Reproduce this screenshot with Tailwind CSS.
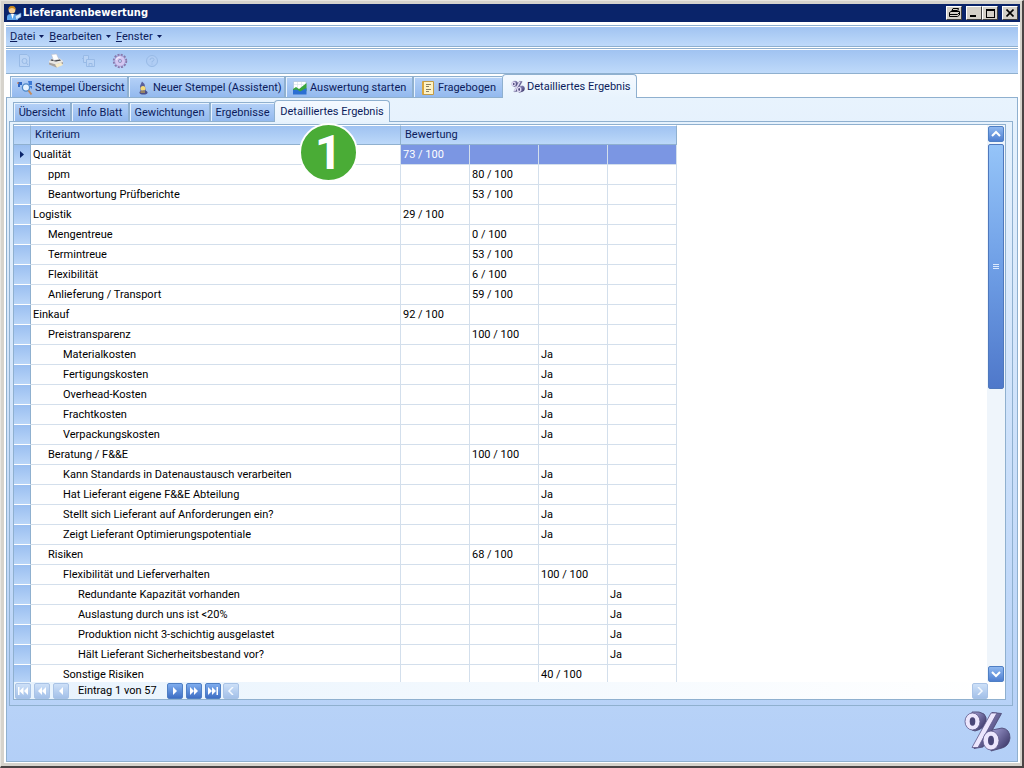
<!DOCTYPE html>
<html lang="de">
<head>
<meta charset="utf-8">
<title>Lieferantenbewertung</title>
<script src="https://cdn.jsdelivr.net/npm/@tailwindcss/browser@4"></script>
</head>
<body class="h-screen overflow-hidden bg-[#d6d3cc] font-['Roboto','Noto_Sans',sans-serif] text-[11px] leading-4 text-[#0c1c5c]">
<svg width="0" height="0" class="absolute">
  <defs>
    <linearGradient id="violet" x1="0" y1="0" x2="1" y2="1"><stop offset="0" stop-color="#a5a1d6"/><stop offset="1" stop-color="#2b2758"/></linearGradient>
    <symbol id="percent" viewBox="0 0 48 42">
      <path d="M9 1 Q17 0 21 3 Q24 6 23 11 Q21 18 12 20 L9 19Z" fill="url(#violet)" stroke="#48446e" stroke-width=".8"/>
      <path d="M29 1.500 L38.500 2.500 L20 36 L11 37.500Z" fill="url(#violet)" stroke="#48446e" stroke-width=".8"/>
      <path d="M29 19 L39 17 Q47 18 47 27 Q46 35 39 37 L28 40Z" fill="url(#violet)" stroke="#48446e" stroke-width=".8"/>
      <path d="M28 2 L34 2 L15 36.500 L9 36.500Z" fill="#ece6fd" stroke="#5d5788" stroke-width=".8"/>
      <ellipse cx="9.500" cy="10.500" rx="7.500" ry="8.500" fill="#ece6fd" stroke="#5d5788" stroke-width=".8"/>
      <ellipse cx="9.500" cy="10.500" rx="2.800" ry="4.200" fill="#4a4678"/>
      <ellipse cx="28" cy="29.500" rx="8" ry="9.500" fill="#ece6fd" stroke="#5d5788" stroke-width=".8"/>
      <ellipse cx="28" cy="29.500" rx="3" ry="4.800" fill="#4a4678"/>
    </symbol>
  </defs>
</svg>
<div class="flex h-full flex-col border-t border-l border-r-2 border-b-2 border-t-[#e8e6e0] border-l-[#e8e6e0] border-r-[#4a4444] border-b-[#4a4444] p-[3px] pr-0.5">
  <header class="flex h-[18px] shrink-0 items-center bg-[#0a246a] pr-0.5 pl-0.5 text-white">
    <svg class="h-4 w-4 shrink-0" viewBox="0 0 16 16">
      <path d="M1 15 V12 Q1 9 5 9 H8 Q12 9 12 12 V15Z" fill="#5aa5ee"/>
      <circle cx="6" cy="5" r="3.400" fill="#f6cf94"/><path d="M2.500 5 Q2 1 6 1 Q10 1 9.600 5 Q8 3 6 3 Q4 3 2.500 5Z" fill="#c98a1c"/>
      <path d="M5 9 L6.500 14 L8 9Z" fill="#fff"/><path d="M9 11 L15 8 V12 L10 15Z" fill="#cfe6fb" stroke="#3f82cc" stroke-width=".6"/>
    </svg>
    <h1 class="ml-px font-['DejaVu_Sans_Condensed','Noto_Sans',sans-serif] text-[11px] font-bold">Lieferantenbewertung</h1>
    <div class="ml-auto flex items-center text-black">
      <button aria-label="Drucken" class="mr-1 flex h-3.5 w-4 items-center justify-center border border-t-white border-l-white border-r-[#404040] border-b-[#404040] bg-[#d4d0c8]">
        <svg class="h-3 w-3 shrink-0" viewBox="0 0 12 12" fill="none" stroke="#000"><path d="M3.500 4.500 L5 1.500 H10.500 L9.500 4.500 M1.500 5.500 L3 4.500 H11.500 V8 L9.500 9.500 H1.500Z M1.500 7.500 H9.500 L11 6 M4 3.500 H9"/></svg>
      </button>
      <button aria-label="Minimieren" class="flex h-3.5 w-4 items-end border border-t-white border-l-white border-r-[#404040] border-b-[#404040] bg-[#d4d0c8] pb-0.5 pl-[3px]"><span class="h-0.5 w-1.5 bg-black"></span></button>
      <button aria-label="Maximieren" class="mr-1 flex h-3.5 w-4 items-center justify-center border border-t-white border-l-white border-r-[#404040] border-b-[#404040] bg-[#d4d0c8]"><span class="h-[9px] w-[9px] border border-t-2 border-black"></span></button>
      <button aria-label="Schließen" class="flex h-3.5 w-4 items-center justify-center border border-t-white border-l-white border-r-[#404040] border-b-[#404040] bg-[#d4d0c8]"><svg class="h-2 w-2" viewBox="0 0 8 8" stroke="#000" stroke-width="1.600"><path d="M0.500 0.500 L7.500 7.500 M7.500 0.500 L0.500 7.500"/></svg></button>
    </div>
  </header>

  <div class="flex min-h-0 flex-1 flex-col bg-white px-0.5 pt-[3px] pb-px">
    <nav class="flex h-[22px] shrink-0 items-center gap-[5px] border-y border-[#8fb0cf] bg-linear-to-b from-[#9fc2f1] to-[#bfdafa] pt-px pl-1 shadow-[inset_0_1px_0_#fff]">
      <button class="flex items-center gap-1"><span><u>D</u>atei</span><svg class="h-[3px] w-[5px]" viewBox="0 0 5 3"><path d="M0 0H5L2.500 3Z" fill="#0c1c5c"/></svg></button>
      <button class="flex items-center gap-1"><span><u>B</u>earbeiten</span><svg class="h-[3px] w-[5px]" viewBox="0 0 5 3"><path d="M0 0H5L2.500 3Z" fill="#0c1c5c"/></svg></button>
      <button class="flex items-center gap-1"><span><u>F</u>enster</span><svg class="h-[3px] w-[5px]" viewBox="0 0 5 3"><path d="M0 0H5L2.500 3Z" fill="#0c1c5c"/></svg></button>
    </nav>
    <div class="mt-px flex h-[26px] shrink-0 items-center gap-4 border-y border-[#8fb0cf] bg-linear-to-b from-[#9fc2f1] to-[#bfdafa] pl-2.5 shadow-[inset_0_1px_0_#fff]" role="toolbar">
      <button aria-label="Vorschau" disabled class="h-4 w-4"><svg viewBox="0 0 16 16" fill="#b9d3f5" stroke="#98bae6"><path d="M3.500 1.500H11L13.500 4V13.500H3.500Z"/><circle cx="8.500" cy="8" r="2.500"/><path d="M10.500 10L12 12"/></svg></button>
      <button aria-label="Drucken" class="h-4 w-4"><svg viewBox="0 0 16 16"><path d="M1 8 L4 5.500 H12 L15 8 V11 L9 14.500 L1 11.500Z" fill="#e9e7e4"/><path d="M1 9.500 L8 11.500 L15 9 V11 L8.500 14.500 L1 11.500Z" fill="#a5a19f"/><path d="M3 6.500 H12 L13 7.500 L8 8.500 L2.500 7.500Z" fill="#37383d"/><path d="M5.500 7.500 L3.500 1.500 L8.500 1 L11 6.500Z" fill="#fff" stroke="#b9b9c4" stroke-width=".5"/><path d="M7 11.500 L13 9.500 L15 12 L9 14.500Z" fill="#f7ecc9"/></svg></button>
      <button aria-label="Speichern" disabled class="h-4 w-4"><svg viewBox="0 0 16 16" fill="#b9d3f5" stroke="#98bae6"><path d="M3.500 2.500H8.500V9.500H3.500Z"/><path d="M6.500 6.500H14.500V13.500H6.500Z"/><path d="M9 13V10.500H12V13M2 5.500H4"/></svg></button>
      <button aria-label="Einstellungen" class="h-4 w-4"><svg viewBox="0 0 16 16"><circle cx="8" cy="8" r="6.200" fill="none" stroke="#8878ac" stroke-width="2" stroke-dasharray="2 1.246"/><circle cx="8" cy="8" r="5.300" fill="#d3c8f2" stroke="#a396cd" stroke-width=".6"/><path d="M4 7Q5.500 4 8.500 4" fill="none" stroke="#f0e9fc" stroke-width="1.200"/><circle cx="8" cy="8" r="1.600" fill="#b4cdf3" stroke="#8f82b4" stroke-width=".8"/></svg></button>
      <button aria-label="Hilfe" disabled class="h-4 w-4"><svg viewBox="0 0 16 16" fill="none" stroke="#98bae6"><circle cx="8" cy="8" r="5.500" fill="#b0cdf4"/><path d="M6 7 Q6 5 8 5 Q10 5 10 6.500 Q10 8 8 8.500 V9.500 M8 10.500V11.500"/></svg></button>
    </div>

    <div class="z-10 -mb-px flex shrink-0 items-end pl-1" role="tablist">
      <button role="tab" class="flex h-[22px] w-[118px] items-center gap-0.5 border border-[#8fb0cf] bg-linear-to-b from-[#b5d1f7] to-[#93b9ee] pt-px pl-1.5 whitespace-nowrap shadow-[inset_1px_1px_0_#e8f3fe]">
        <svg class="h-4 w-4 shrink-0" viewBox="0 0 16 16"><path d="M1 2H5V5H3V7H1Z" fill="#2f66c2"/><path d="M0 3H2" stroke="#d9783a"/><path d="M11 1H15V5H12ZM12 6H15V9" fill="#3d7ad6"/><circle cx="9" cy="7.500" r="3.600" fill="#e7f4ff" stroke="#4d88c8" stroke-width="1.300"/><path d="M11.500 10.500L14.500 14.500" stroke="#c58a5a" stroke-width="2"/></svg>Stempel Übersicht</button>
      <button role="tab" class="flex h-[22px] w-[157px] items-center gap-0.5 border border-[#8fb0cf] bg-linear-to-b from-[#b5d1f7] to-[#93b9ee] pt-px pl-1.5 whitespace-nowrap shadow-[inset_1px_1px_0_#e8f3fe]">
        <svg class="h-4 w-4 shrink-0" viewBox="0 0 16 16"><path d="M7 1.500 L9.500 4 L11 11 H5.500 L5 6Z" fill="#5a5f99"/><circle cx="8" cy="8.500" r="2.500" fill="#f4da78"/><ellipse cx="8.500" cy="12.500" rx="4" ry="2" fill="#4b4e88"/><path d="M5.500 12H10" stroke="#e0b340"/></svg>Neuer Stempel (Assistent)</button>
      <button role="tab" class="flex h-[22px] w-[128px] items-center gap-0.5 border border-[#8fb0cf] bg-linear-to-b from-[#b5d1f7] to-[#93b9ee] pt-px pl-1.5 whitespace-nowrap shadow-[inset_1px_1px_0_#e8f3fe]">
        <svg class="h-4 w-4 shrink-0" viewBox="0 0 16 16"><path d="M1.500 1.500H14V14H1.500Z" fill="#fff" stroke="#a8bed6" stroke-width=".6"/><path d="M5.500 2V8M9.500 2V7M2 4.500H12" stroke="#d5dfe9" stroke-width=".6"/><path d="M1 9L4 7L7 9L14.500 3V11L8 14L1 11Z" fill="#39a63b"/><path d="M1 10L5 9.500L8 11.500L14.500 8V14.500H1Z" fill="#2b6fd2"/></svg>Auswertung starten</button>
      <button role="tab" class="flex h-[22px] w-[89px] items-center gap-0.5 border border-r-0 border-[#8fb0cf] bg-linear-to-b from-[#b5d1f7] to-[#93b9ee] pt-px pl-1.5 whitespace-nowrap shadow-[inset_1px_1px_0_#e8f3fe]">
        <svg class="h-4 w-4 shrink-0" viewBox="0 0 16 16"><path d="M2.500 1.500H13.500V14.500H2.500Z" fill="#fff3c4" stroke="#c49b44"/><path d="M3 2V14" stroke="#d9a63c" stroke-width="2"/><path d="M6 4.500H11M6 6.500H9M6 9.500H11M6 11.500H9" stroke="#8a7f62"/></svg>Fragebogen</button>
      <button role="tab" aria-selected="true" class="flex h-6 w-[135px] items-center gap-0.5 rounded-t-[4px] border border-b-0 border-[#8fb0cf] bg-linear-to-b from-[#f4f9ff] to-[#e8f3fd] pl-2 whitespace-nowrap">
        <svg class="h-3.5 w-3.5 shrink-0"><use href="#percent"/></svg>Detailliertes Ergebnis</button>
    </div>

    <main class="flex min-h-0 flex-1 flex-col border border-[#8fb0cf] bg-linear-to-b from-[#e8f3fd] to-[#b3cff7] pt-0.5 pr-1 pl-0.5">
      <div class="z-10 -mb-px flex shrink-0 items-end pl-1" role="tablist">
        <button role="tab" class="h-5 w-[58px] border border-[#8fb0cf] bg-linear-to-b from-[#b5d1f7] to-[#93b9ee] pt-px whitespace-nowrap shadow-[inset_1px_1px_0_#e8f3fe]">Übersicht</button>
        <button role="tab" class="h-5 w-[58px] border border-[#8fb0cf] bg-linear-to-b from-[#b5d1f7] to-[#93b9ee] pt-px whitespace-nowrap shadow-[inset_1px_1px_0_#e8f3fe]">Info Blatt</button>
        <button role="tab" class="h-5 w-[81px] border border-[#8fb0cf] bg-linear-to-b from-[#b5d1f7] to-[#93b9ee] pt-px whitespace-nowrap shadow-[inset_1px_1px_0_#e8f3fe]">Gewichtungen</button>
        <button role="tab" class="h-5 w-16 border border-r-0 border-[#8fb0cf] bg-linear-to-b from-[#b5d1f7] to-[#93b9ee] pt-px whitespace-nowrap shadow-[inset_1px_1px_0_#e8f3fe]">Ergebnisse</button>
        <button role="tab" aria-selected="true" class="h-[22px] w-[116px] rounded-t-[4px] border border-b-0 border-[#8fb0cf] bg-linear-to-b from-[#f4f9ff] to-[#e8f3fd] whitespace-nowrap">Detailliertes Ergebnis</button>
      </div>

      <section class="flex min-h-0 flex-1 flex-col border border-[#8fb0cf] pt-0.5 pr-1.5 pb-[5px] pl-[3px]">
        <div class="flex min-h-0 flex-1 flex-col border border-[#8fb0cf] bg-white">
          <div class="flex min-h-0 flex-1">
            <div class="min-w-0 flex-1 overflow-hidden">
              <table class="w-[663px] table-fixed border-separate border-spacing-0 leading-[14px]">
                <colgroup><col class="w-[17px]"><col class="w-[370px]"><col class="w-[69px]"><col class="w-[69px]"><col class="w-[69px]"><col class="w-[69px]"></colgroup>
                <thead>
                  <tr class="h-5 text-left">
                    <th class="border-t border-r border-b border-t-white border-r-[#8fb0cf] border-b-[#8fb0cf] bg-linear-to-b from-[#9fc2f1] to-[#bcd8f9] p-0" aria-label="Markierung"></th>
                    <th class="border-t border-r border-b border-t-white border-r-[#8fb0cf] border-b-[#8fb0cf] bg-linear-to-b from-[#9fc2f1] to-[#bcd8f9] p-0 pl-1 font-normal">Kriterium</th>
                    <th colspan="4" class="border-t border-r border-b border-t-white border-r-[#8fb0cf] border-b-[#8fb0cf] bg-linear-to-b from-[#9fc2f1] to-[#bcd8f9] p-0 pl-1 font-normal">Bewertung</th>
                  </tr>
                </thead>
                <tbody id="rows" class="text-black"></tbody>
              </table>
            </div>
            <div class="flex w-[18px] shrink-0 flex-col items-center gap-0.5 bg-[#eff5fb] pt-px">
              <button aria-label="Nach oben" class="flex h-4 w-4 shrink-0 items-center justify-center rounded-[2px] border border-[#4f7fc4] bg-linear-to-b from-[#8fb8f0] to-[#4f7fd0]"><svg class="h-2 w-2.5" viewBox="0 0 10 8" fill="none" stroke="#fff" stroke-width="2"><path d="M1 6L5 2L9 6"/></svg></button>
              <div class="flex h-[245px] w-4 shrink-0 flex-col items-center justify-center gap-px rounded-[2px] border border-[#4f78bd] bg-linear-to-b from-[#95c4f8] via-[#6f9fe6] to-[#4f78ca]"><i class="h-px w-1.5 bg-[#dceafd]"></i><i class="h-px w-1.5 bg-[#dceafd]"></i><i class="h-px w-1.5 bg-[#dceafd]"></i></div>
              <button aria-label="Nach unten" class="mt-auto flex h-4 w-4 shrink-0 items-center justify-center rounded-[2px] border border-[#4f7fc4] bg-linear-to-b from-[#8fb8f0] to-[#4f7fd0]"><svg class="h-2 w-2.5" viewBox="0 0 10 8" fill="none" stroke="#fff" stroke-width="2"><path d="M1 2L5 6L9 2"/></svg></button>
            </div>
          </div>
          <footer class="flex h-[17px] shrink-0 items-center bg-linear-to-r from-[#e8f3fd] to-white pr-[17px] pl-px text-black">
            <div class="flex gap-[3px]">
              <button aria-label="Erster" disabled class="flex h-4 w-4 items-center justify-center rounded-[2px] border border-[#a9c3e6] bg-linear-to-b from-[#cde0f8] to-[#a3c0e8]"><svg class="h-2 w-2.5" viewBox="0 0 10 8" fill="#fff"><path d="M0 0H1.500V8H0ZM5.500 0V8L1.500 4ZM10 0V8L6 4Z"/></svg></button>
              <button aria-label="Seite zurück" disabled class="flex h-4 w-4 items-center justify-center rounded-[2px] border border-[#a9c3e6] bg-linear-to-b from-[#cde0f8] to-[#a3c0e8]"><svg class="h-2 w-2.5" viewBox="0 0 10 8" fill="#fff"><path d="M5 0V8L1 4ZM9 0V8L5 4Z"/></svg></button>
              <button aria-label="Zurück" disabled class="flex h-4 w-4 items-center justify-center rounded-[2px] border border-[#a9c3e6] bg-linear-to-b from-[#cde0f8] to-[#a3c0e8]"><svg class="h-2 w-2.5" viewBox="0 0 10 8" fill="#fff"><path d="M7 0V8L3 4Z"/></svg></button>
            </div>
            <span class="w-[98px] pl-[9px] whitespace-nowrap">Eintrag 1 von 57</span>
            <div class="flex gap-[3px]">
              <button aria-label="Weiter" class="flex h-4 w-4 items-center justify-center rounded-[2px] border border-[#4f7fc4] bg-linear-to-b from-[#7fadee] to-[#3f6fc4]"><svg class="h-2 w-2.5" viewBox="0 0 10 8" fill="#fff"><path d="M3 0V8L7 4Z"/></svg></button>
              <button aria-label="Seite vor" class="flex h-4 w-4 items-center justify-center rounded-[2px] border border-[#4f7fc4] bg-linear-to-b from-[#7fadee] to-[#3f6fc4]"><svg class="h-2 w-2.5" viewBox="0 0 10 8" fill="#fff"><path d="M1 0V8L5 4ZM5 0V8L9 4Z"/></svg></button>
              <button aria-label="Letzter" class="flex h-4 w-4 items-center justify-center rounded-[2px] border border-[#4f7fc4] bg-linear-to-b from-[#7fadee] to-[#3f6fc4]"><svg class="h-2 w-2.5" viewBox="0 0 10 8" fill="#fff"><path d="M0 0V8L4 4ZM4 0V8L8 4ZM8.500 0H10V8H8.500Z"/></svg></button>
            </div>
            <button aria-label="Nach links" disabled class="ml-0.5 flex h-4 w-4 items-center justify-center rounded-[2px] border border-[#a9c3e6] bg-linear-to-b from-[#cde0f8] to-[#a3c0e8]"><svg class="h-2 w-2" viewBox="0 0 8 8" fill="none" stroke="#f4f9ff" stroke-width="1.500"><path d="M6 0L2 4L6 8"/></svg></button>
            <button aria-label="Nach rechts" disabled class="ml-auto flex h-4 w-4 items-center justify-center rounded-[2px] border border-[#a9c3e6] bg-linear-to-b from-[#cde0f8] to-[#a3c0e8]"><svg class="h-2 w-2" viewBox="0 0 8 8" fill="none" stroke="#f4f9ff" stroke-width="1.500"><path d="M2 0L6 4L2 8"/></svg></button>
          </footer>
        </div>
      </section>

      <div class="flex h-[55px] shrink-0 items-start justify-end pt-[5px] pr-0.5">
        <svg class="h-[42px] w-12" role="img" aria-label="Prozent"><use href="#percent"/></svg>
      </div>
    </main>
  </div>
</div>

<div class="absolute top-[123px] left-[299px] z-20 flex h-[59px] w-[59px] items-center justify-center rounded-full border-2 border-white bg-[#4aac36] font-['Roboto',sans-serif] text-5xl leading-none font-bold text-white">1</div>

<script>
const data = [
  [0,"Qualität","73 / 100"],[1,"ppm","80 / 100"],[1,"Beantwortung Prüfberichte","53 / 100"],
  [0,"Logistik","29 / 100"],[1,"Mengentreue","0 / 100"],[1,"Termintreue","53 / 100"],[1,"Flexibilität","6 / 100"],[1,"Anlieferung / Transport","59 / 100"],
  [0,"Einkauf","92 / 100"],[1,"Preistransparenz","100 / 100"],[2,"Materialkosten","Ja"],[2,"Fertigungskosten","Ja"],[2,"Overhead-Kosten","Ja"],[2,"Frachtkosten","Ja"],[2,"Verpackungskosten","Ja"],
  [1,"Beratung / F&&E","100 / 100"],[2,"Kann Standards in Datenaustausch verarbeiten","Ja"],[2,"Hat Lieferant eigene F&&E Abteilung","Ja"],[2,"Stellt sich Lieferant auf Anforderungen ein?","Ja"],[2,"Zeigt Lieferant Optimierungspotentiale","Ja"],
  [1,"Risiken","68 / 100"],[2,"Flexibilität und Lieferverhalten","100 / 100"],[3,"Redundante Kapazität vorhanden","Ja"],[3,"Auslastung durch uns ist <20%","Ja"],[3,"Produktion nicht 3-schichtig ausgelastet","Ja"],[3,"Hält Lieferant Sicherheitsbestand vor?","Ja"],
  [2,"Sonstige Risiken","40 / 100"]
];
const indent = ["pl-0.5", "pl-[17px]", "pl-8", "pl-[47px]"];
const body = document.getElementById("rows");
data.forEach(([level, name, value], i) => {
  const tr = body.insertRow();
  tr.className = "h-5";
  const mark = tr.insertCell();
  mark.className = "border-r border-b border-r-[#8fb0cf] border-b-white bg-linear-to-b from-[#9bbff0] to-[#b9d5f8] p-0 pl-1.5";
  if (i === 0) mark.innerHTML = '<svg class="h-[7px] w-1" viewBox="0 0 4 7"><path d="M0 0V7L4 3.500Z" fill="#0a246a"/></svg>';
  const label = tr.insertCell();
  label.className = "border-r border-b border-[#d3dfec] p-0 whitespace-nowrap " + indent[level];
  label.textContent = name;
  for (let c = 0; c < 4; c++) {
    const td = tr.insertCell();
    td.className = "border-r border-b border-[#d3dfec] p-0 pl-0.5 whitespace-nowrap " + (i === 0 ? "bg-[#7b96e3] text-white" : "");
    if (c === level) td.textContent = value;
  }
});
</script>
</body>
</html>
